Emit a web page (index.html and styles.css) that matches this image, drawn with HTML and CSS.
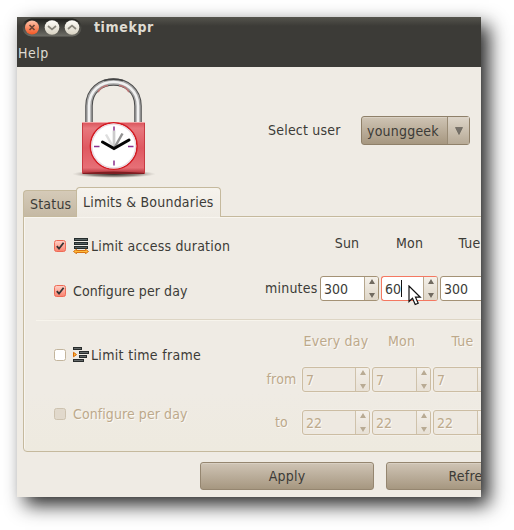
FILE: index.html
```html
<!DOCTYPE html>
<html lang="en">
<head>
<meta charset="utf-8">
<title>timekpr</title>
<link rel="stylesheet" href="styles.css">
</head>
<body>
<svg class="defs" width="0" height="0" aria-hidden="true">
  <defs>
    <linearGradient id="redbox" x1="0" y1="0" x2="0" y2="1"><stop offset="0" stop-color="#d85158"/><stop offset=".12" stop-color="#e8777d"/><stop offset=".5" stop-color="#df5961"/><stop offset=".88" stop-color="#e76f76"/><stop offset="1" stop-color="#a92930"/></linearGradient>
    <linearGradient id="orange" x1="0" y1="0" x2="0" y2="1"><stop offset="0" stop-color="#ffc5ac"/><stop offset="1" stop-color="#f45622"/></linearGradient>
    <linearGradient id="pearl" x1="0" y1="0" x2="0" y2="1"><stop offset="0" stop-color="#fffefa"/><stop offset="1" stop-color="#d8d2c2"/></linearGradient>
    <linearGradient id="well" x1="0" y1="0" x2="0" y2="1"><stop offset="0" stop-color="#1f1f1c"/><stop offset="1" stop-color="#6f6e67"/></linearGradient>
    <radialGradient id="ground"><stop offset="0" stop-color="#2a201b"/><stop offset=".6" stop-color="#6b625b" stop-opacity=".7"/><stop offset="1" stop-color="#a9a29b" stop-opacity="0"/></radialGradient>
    <linearGradient id="checked" x1="0" y1="0" x2="0" y2="1"><stop offset="0" stop-color="#ffd2c8"/><stop offset="1" stop-color="#fa806c"/></linearGradient>
    <g id="check"><rect x=".5" y=".5" width="11" height="11" rx="2" fill="url(#checked)" stroke="#ee6b56"/><path d="M2.800 6.200 5 8.700 9.600 2.700" fill="none" stroke="#343434" stroke-width="1.800"/></g>
  </defs>
</svg>
<main class="window">
  <header class="chrome">
    <div class="titlebar">
      <svg class="controls" width="60" height="19" viewBox="0 0 60 19">
        <rect x=".5" y=".5" width="59" height="18" rx="9" fill="url(#well)"/>
        <circle cx="10" cy="9.500" r="7" fill="url(#orange)"/>
        <circle cx="30" cy="9.500" r="7.300" fill="url(#pearl)"/>
        <circle cx="50" cy="9.500" r="7.300" fill="url(#pearl)"/>
        <path d="m7.500 7 5 5m0-5-5 5" stroke="#6b4536" stroke-width="1.700"/>
        <path d="m26 8 4 3.300L34 8M46 11l4-3.300 4 3.300" fill="none" stroke="#88857b" stroke-width="1.700"/>
      </svg>
      <h1>timekpr</h1>
    </div>
    <nav class="menu">Help</nav>
  </header>
  <section class="user">
    <svg class="lock" width="90" height="108" viewBox="0 0 90 108">
      <ellipse cx="46" cy="101" rx="42" ry="4" fill="url(#ground)"/>
      <g fill="none">
        <path d="M21 51V33C21 1 70 1 70 33V51" stroke="#4b4b4b" stroke-width="7.500"/>
        <path d="M21 51V33C21 1 70 1 70 33V51" stroke="#a4a4a4" stroke-width="5.500"/>
        <path d="M21 51V33C21 1 70 1 70 33V51" stroke="#f1f1f1" stroke-width="2.600"/>
        <path d="M36 7.500Q45.500 5 55 7.500" stroke="#444" stroke-width="1.500"/>
        <path d="M30 19Q34 12.500 40 12.500M51 12.500Q57 12.500 61 19" stroke="#bd7878" stroke-width="1.500"/>
      </g>
      <rect x="14" y="49" width="63" height="52" rx="1" fill="url(#redbox)"/>
      <path d="M14.500 50v50M76.500 50v50" stroke="#c83a42"/>
      <path d="M14 49.500h63" stroke="#f3a3a5"/>
      <path d="M15 100q30.500-3 61 0v1H15z" fill="#7d1e22"/>
      <circle cx="45.700" cy="73" r="23.300" fill="#fff" stroke="#d31920" stroke-width="1.600"/>
      <circle cx="45.700" cy="73" r="21.900" fill="none" stroke="#e8dbe2" stroke-width="1.400"/>
      <path d="M46 53.500v5M46 87.500v5M26 73.500h5.500M60 73.500h5.500" stroke="#8a3190" stroke-width="1.500"/>
      <path d="m46 75.500-8-14" stroke="#dedede" stroke-width="2.500"/>
      <path d="M46 75.500v-18" stroke="#ccc" stroke-width="2.700"/>
      <path d="m46 75.500 8.500-15" stroke="#929292" stroke-width="2.500"/>
      <path d="m34.500 69 11.500 6.500 15-8.500" fill="none" stroke="#050505" stroke-width="3" stroke-linecap="round"/>
    </svg>
    <span class="prompt">Select user</span>
    <div class="combo"><span>younggeek</span><i><svg width="8" height="8"><path d="M.5.500h7L4 7.500z"/></svg></i></div>
  </section>
  <div class="tabs"><div class="tab">Status</div><div class="tab active">Limits &amp; Boundaries</div></div>
  <section class="panel">
    <div class="duration">
      <div class="options">
        <label><svg class="box" width="12" height="12"><use href="#check"/></svg>
          <svg class="glyph" width="16" height="16"><path d="M1 1.500h14M1 5.500h14M1 9.500h14" stroke="#252c2c" stroke-width="3"/><path d="M2 1.500h12M2 5.500h12M2 9.500h12" stroke="#657171" stroke-width=".8"/><path d="m.5 13.500 3-2.300v1.300h9v-1.300l3 2.300-3 2.200v-1.200h-9v1.200z" fill="#ffbd3c" stroke="#d56600" stroke-width=".9"/></svg><span>Limit access duration</span></label>
        <label class="daily"><svg class="box" width="12" height="12"><use href="#check"/></svg><span>Configure per day</span></label>
      </div>
      <div class="limits">
        <b></b><b class="sun">Sun</b><b>Mon</b><b>Tue</b>
        <span class="minutes">minutes</span>
        <div class="spin"><span>300</span><i><svg width="6" height="19"><path d="M3 0 6 5H0zM0 14h6l-3 5z"/></svg></i></div>
        <div class="spin focused"><span>60</span><u></u><i><svg width="6" height="19"><path d="M3 0 6 5H0zM0 14h6l-3 5z"/></svg></i></div>
        <div class="spin"><span>300</span><i><svg width="6" height="19"><path d="M3 0 6 5H0zM0 14h6l-3 5z"/></svg></i></div>
      </div>
    </div>
    <div class="rule"></div>
    <div class="frame">
      <div class="options">
        <label class="window-label"><svg class="box" width="12" height="12"><rect x=".5" y=".5" width="11" height="11" rx="2" fill="#fff" stroke="#c3b59d"/></svg>
          <svg class="glyph" width="16" height="16"><path d="M0 1.500h9M6 5.500h10M6 9.500h8M0 13.500h11" stroke="#292d2d" stroke-width="3"/><path d="M1 1.500h7M7 5.500h8M7 9.500h6M1 13.500h9" stroke="#737979" stroke-width=".8"/><path d="m.5 5.300 3 2.300-3 2.200z" fill="#ffbd3c" stroke="#d56600"/></svg><span>Limit time frame</span></label>
        <label class="daily off"><svg class="box" width="12" height="12"><rect x=".5" y=".5" width="11" height="11" rx="2" fill="#e1d9cc" stroke="#cdc2af"/></svg><span>Configure per day</span></label>
      </div>
      <div class="times off">
        <b></b><b>Every day</b><b>Mon</b><b>Tue</b>
        <span>from</span>
        <div class="spin"><span>7</span><i><svg width="6" height="19"><path d="M3 0 6 5H0zM0 14h6l-3 5z"/></svg></i></div>
        <div class="spin"><span>7</span><i><svg width="6" height="19"><path d="M3 0 6 5H0zM0 14h6l-3 5z"/></svg></i></div>
        <div class="spin"><span>7</span><i><svg width="6" height="19"><path d="M3 0 6 5H0zM0 14h6l-3 5z"/></svg></i></div>
        <span>to</span>
        <div class="spin"><span>22</span><i><svg width="6" height="19"><path d="M3 0 6 5H0zM0 14h6l-3 5z"/></svg></i></div>
        <div class="spin"><span>22</span><i><svg width="6" height="19"><path d="M3 0 6 5H0zM0 14h6l-3 5z"/></svg></i></div>
        <div class="spin"><span>22</span><i><svg width="6" height="19"><path d="M3 0 6 5H0zM0 14h6l-3 5z"/></svg></i></div>
      </div>
    </div>
  </section>
  <footer><button>Apply</button><button>Refresh</button></footer>
</main>
<svg class="pointer" width="14" height="21" viewBox="0 0 14 21"><path d="M1 1v15.500l3.500-3.300 2.700 6.300 3-1.300-2.700-6H12.300z" fill="#fff" stroke="#111" stroke-width="1.200"/></svg>
</body>
</html>
```
FILE: styles.css
```css
* { box-sizing: border-box; }
body { margin: 0; padding: 17px; width: 514px; height: 530px; background: #fff; overflow: hidden; position: relative; font: 14px/20px "DejaVu Sans Condensed", "DejaVu Sans", sans-serif; font-stretch: condensed; letter-spacing: .21px; color: #3c3b37; }
.defs { position: absolute; }
.window { width: 464px; height: 480px; background: #efebe4; overflow: hidden; box-shadow: 8px 8px 18px rgba(0,0,0,.85); }
.chrome { height: 50px; color: #dfdbd2; background: linear-gradient(#55544d, #3c3b37 9px); }
.titlebar { display: flex; align-items: center; height: 20px; padding-left: 5px; }
.controls { display: block; }
h1 { margin: 0 0 0 12px; font-size: 14px; line-height: 20px; font-weight: bold; letter-spacing: .6px; }
.menu { padding: 6px 0 0 1px; letter-spacing: .5px; }
.user { height: 120px; display: flex; padding-top: 6px; padding-left: 51px; }
.lock { flex: none; }
.prompt { margin: 47px 0 0 110px; width: 93px; flex: none; }
.combo { margin-top: 43px; width: 109px; height: 29px; flex: none; display: flex; align-items: center; border: 1px solid #8f8069; border-radius: 3px; background: linear-gradient(#cfc4b4, #a69780); box-shadow: inset 0 1px #d9d0c2; }
.combo span { flex: 1; padding-left: 5px; }
.combo i { width: 22px; height: 27px; display: grid; place-items: center; border-left: 1px solid #998b75; background: linear-gradient(#ddd5c9, #b7aa96); }
.combo svg { fill: #76716a; stroke: #656159; stroke-width: .7; }
.tabs { display: flex; align-items: flex-end; height: 30px; padding-left: 6px; position: relative; }
.tab { width: 54px; height: 27px; padding: 3px 0 0 6px; border: 1px solid #c5b99d; border-right: 0; border-radius: 4px 0 0; background: linear-gradient(#d5cab8, #c5b9a4); }
.tab.active { width: 145px; height: 30px; padding: 4px 0 0 6px; margin-left: -1px; border-right: 1px solid #c5b99d; border-bottom: 0; border-radius: 4px 4px 0 0; background: linear-gradient(#f6f3ed, #efebe4); }
.panel { width: 480px; height: 236px; margin: -1px 0 0 6px; border: 1px solid #c5b99d; border-radius: 0 0 4px 4px; background: linear-gradient(#efebe4 75%, #eeeadf); box-shadow: inset 1px 1px #f8f5ef; }
.duration { display: flex; height: 102px; }
.options { width: 239px; padding: 19px 0 0 30px; flex: none; }
label { display: flex; align-items: center; height: 20px; white-space: nowrap; }
label + label { margin-top: 25px; }
.daily { letter-spacing: .08px; }
.window-label { letter-spacing: .32px; }
.box { margin-right: 7px; flex: none; }
.glyph { margin-right: 2px; flex: none; }
.limits { display: grid; grid-template-columns: 55px 59px 57px 59px; grid-template-rows: 20px 25px; column-gap: 2px; row-gap: 23px; padding-top: 16px; }
b { font-weight: normal; text-align: center; white-space: nowrap; }
.sun { padding-right: 5px; }
.minutes { padding: 2px 0 0 2px; }
.spin { display: flex; height: 25px; border: 1px solid #a49275; border-radius: 3px; background: #fff; align-items: center; overflow: hidden; letter-spacing: 0; }
.spin span { padding-left: 3px; }
.spin i { margin-left: auto; width: 14px; height: 23px; display: grid; place-items: center; background: linear-gradient(#f4f0e9, #ded6c8); border-left: 1px solid #b6a78e; }
.spin svg { fill: #716b61; display: block; }
.spin.focused { border-color: #f47861 #b6a78e #f47861 #f47861; }
.spin u { width: 1px; height: 17px; background: #111; }
.rule { height: 2px; margin-left: 12px; background: linear-gradient(90deg, transparent, #ddd5c4 90px); border-bottom: 1px solid #f7f4ec; }
.frame { display: flex; }
.frame .options { padding-top: 24px; }
.frame label + label { margin-top: 39px; }
.times { display: grid; grid-template-columns: 37px 68px 59px 59px; grid-template-rows: 20px 27px 25px; column-gap: 2px; row-gap: 16px; padding-top: 10px; align-items: start; }
.times > span { text-align: center; padding-top: 2px; }
.off { color: #bda98b; text-shadow: 1px 1px #fbf9f5; }
.off .spin { background: #eee9e1; border-color: #ccbda3; box-shadow: 0 0 0 1px #f3efe8; }
.off .spin i { background: linear-gradient(#f3efe9, #e8e1d6); border-color: #cfc2ab; }
.off .spin svg { fill: #b9ab94; }
footer { display: flex; gap: 12px; padding: 10px 0 0 183px; }
button { flex: none; width: 174px; height: 28px; padding: 0 0 1px; border: 1px solid #958670; border-radius: 3px; font: inherit; letter-spacing: inherit; color: inherit; background: linear-gradient(#cfc4b5, #a69780); box-shadow: inset 0 1px #d8cfc2; }
.pointer { position: absolute; left: 408px; top: 285px; }
```
